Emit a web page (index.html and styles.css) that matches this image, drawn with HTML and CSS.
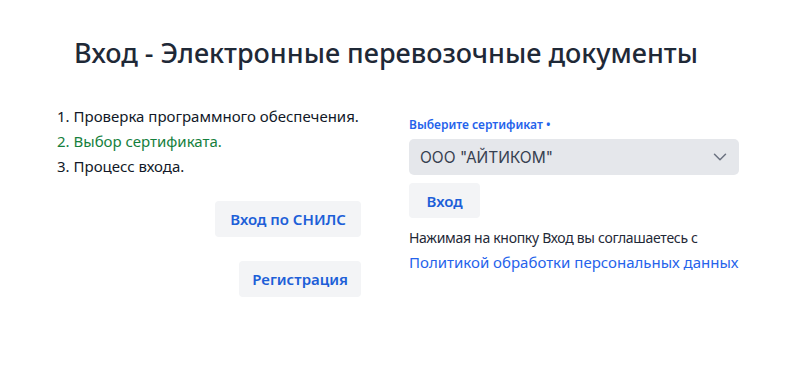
FILE: index.html
```html
<!DOCTYPE html>
<html lang="ru">
<head>
    <meta charset="UTF-8">
    <title>Вход - Электронные перевозочные документы</title>
    <link rel="stylesheet" href="styles.css">
</head>
<body>

<div class="page">
    <h1 class="title">Вход - Электронные перевозочные документы</h1>

    <div class="login">
        <!-- Steps and extra buttons -->
        <div class="login-left">
            <ol class="steps">
                <li>Проверка программного обеспечения.</li>
                <li class="current">Выбор сертификата.</li>
                <li>Процесс входа.</li>
            </ol>
            <button class="btn btn-snils">Вход по СНИЛС</button>
            <button class="btn btn-reg">Регистрация</button>
        </div>

        <!-- Certificate form -->
        <div class="login-right">
            <label class="field-label" for="cert">Выберите сертификат <span class="dot">•</span></label>
            <div class="select">
                <span class="select-value">ООО "АЙТИКОМ"</span>
                <svg class="chevron" width="14" height="8" viewBox="0 0 14 8" fill="none" stroke="#6b7280" stroke-width="1.5" stroke-linecap="round" stroke-linejoin="round">
                    <path d="M1.5 1.2l5.5 5.5 5.5-5.5"/>
                </svg>
            </div>
            <button class="btn btn-login">Вход</button>
            <p class="agree">Нажимая на кнопку Вход вы соглашаетесь с</p>
            <a class="policy" href="#">Политикой обработки персональных данных</a>
        </div>
    </div>
</div>

</body>
</html>
```

FILE: styles.css
```css
/* Basic Styling */
body {
    font-family: "Noto Sans", "Open Sans", sans-serif;
    background-color: #fff;
    color: #111827;
    margin: 0;
    padding: 0;
}
.page {
    padding: 35px 0 0 57px;
}
.title {
    margin: 0 0 0 17px;
    font-size: 27px;
    font-weight: 500;
    color: #1f2937;
    line-height: 36px;
}
.login {
    display: flex;
    gap: 48px;
    margin-top: 33px;
}
.login-left {
    width: 304px;
    display: flex;
    flex-direction: column;
    align-items: flex-end;
}
.steps {
    align-self: stretch;
    margin: 0;
    padding: 0;
    list-style: none;
    counter-reset: step;
    font-size: 15px;
    line-height: 25px;
}
.steps li {
    counter-increment: step;
}
.steps li::before {
    content: counter(step) ". ";
}
.steps li.current {
    color: #15803d;
}
.btn {
    font-family: inherit;
    font-size: 15px;
    font-weight: 600;
    color: #1d5fd8;
    background-color: #f3f4f6;
    border: none;
    border-radius: 4px;
    padding: 0 15px;
    height: 36px;
    cursor: pointer;
}
.btn:hover {
    background-color: #e5e7eb;
}
.btn-snils {
    margin-top: 22px;
}
.btn-reg {
    margin-top: 24px;
    padding: 0 13px;
}
.login-right {
    width: 330px;
    padding-top: 11px;
}
.field-label {
    display: block;
    font-size: 12px;
    font-weight: 600;
    color: #2563eb;
    line-height: 20px;
    margin-bottom: 4px;
}
.select {
    display: flex;
    align-items: center;
    justify-content: space-between;
    height: 36px;
    padding: 0 12px 0 11px;
    background-color: #e5e7eb;
    border-radius: 5px;
    font-family: Inter, sans-serif;
    font-size: 15.5px;
    color: #374151;
}
.btn-login {
    margin-top: 8px;
    width: 71px;
    height: 35px;
    padding: 0;
}
.agree {
    margin: 7px 0 0;
    font-size: 14px;
    letter-spacing: -0.3px;
    line-height: 25px;
    color: #1f2937;
}
.policy {
    display: block;
    font-size: 15px;
    line-height: 25px;
    color: #2563eb;
    text-decoration: none;
}
.policy:hover {
    text-decoration: underline;
}
```
